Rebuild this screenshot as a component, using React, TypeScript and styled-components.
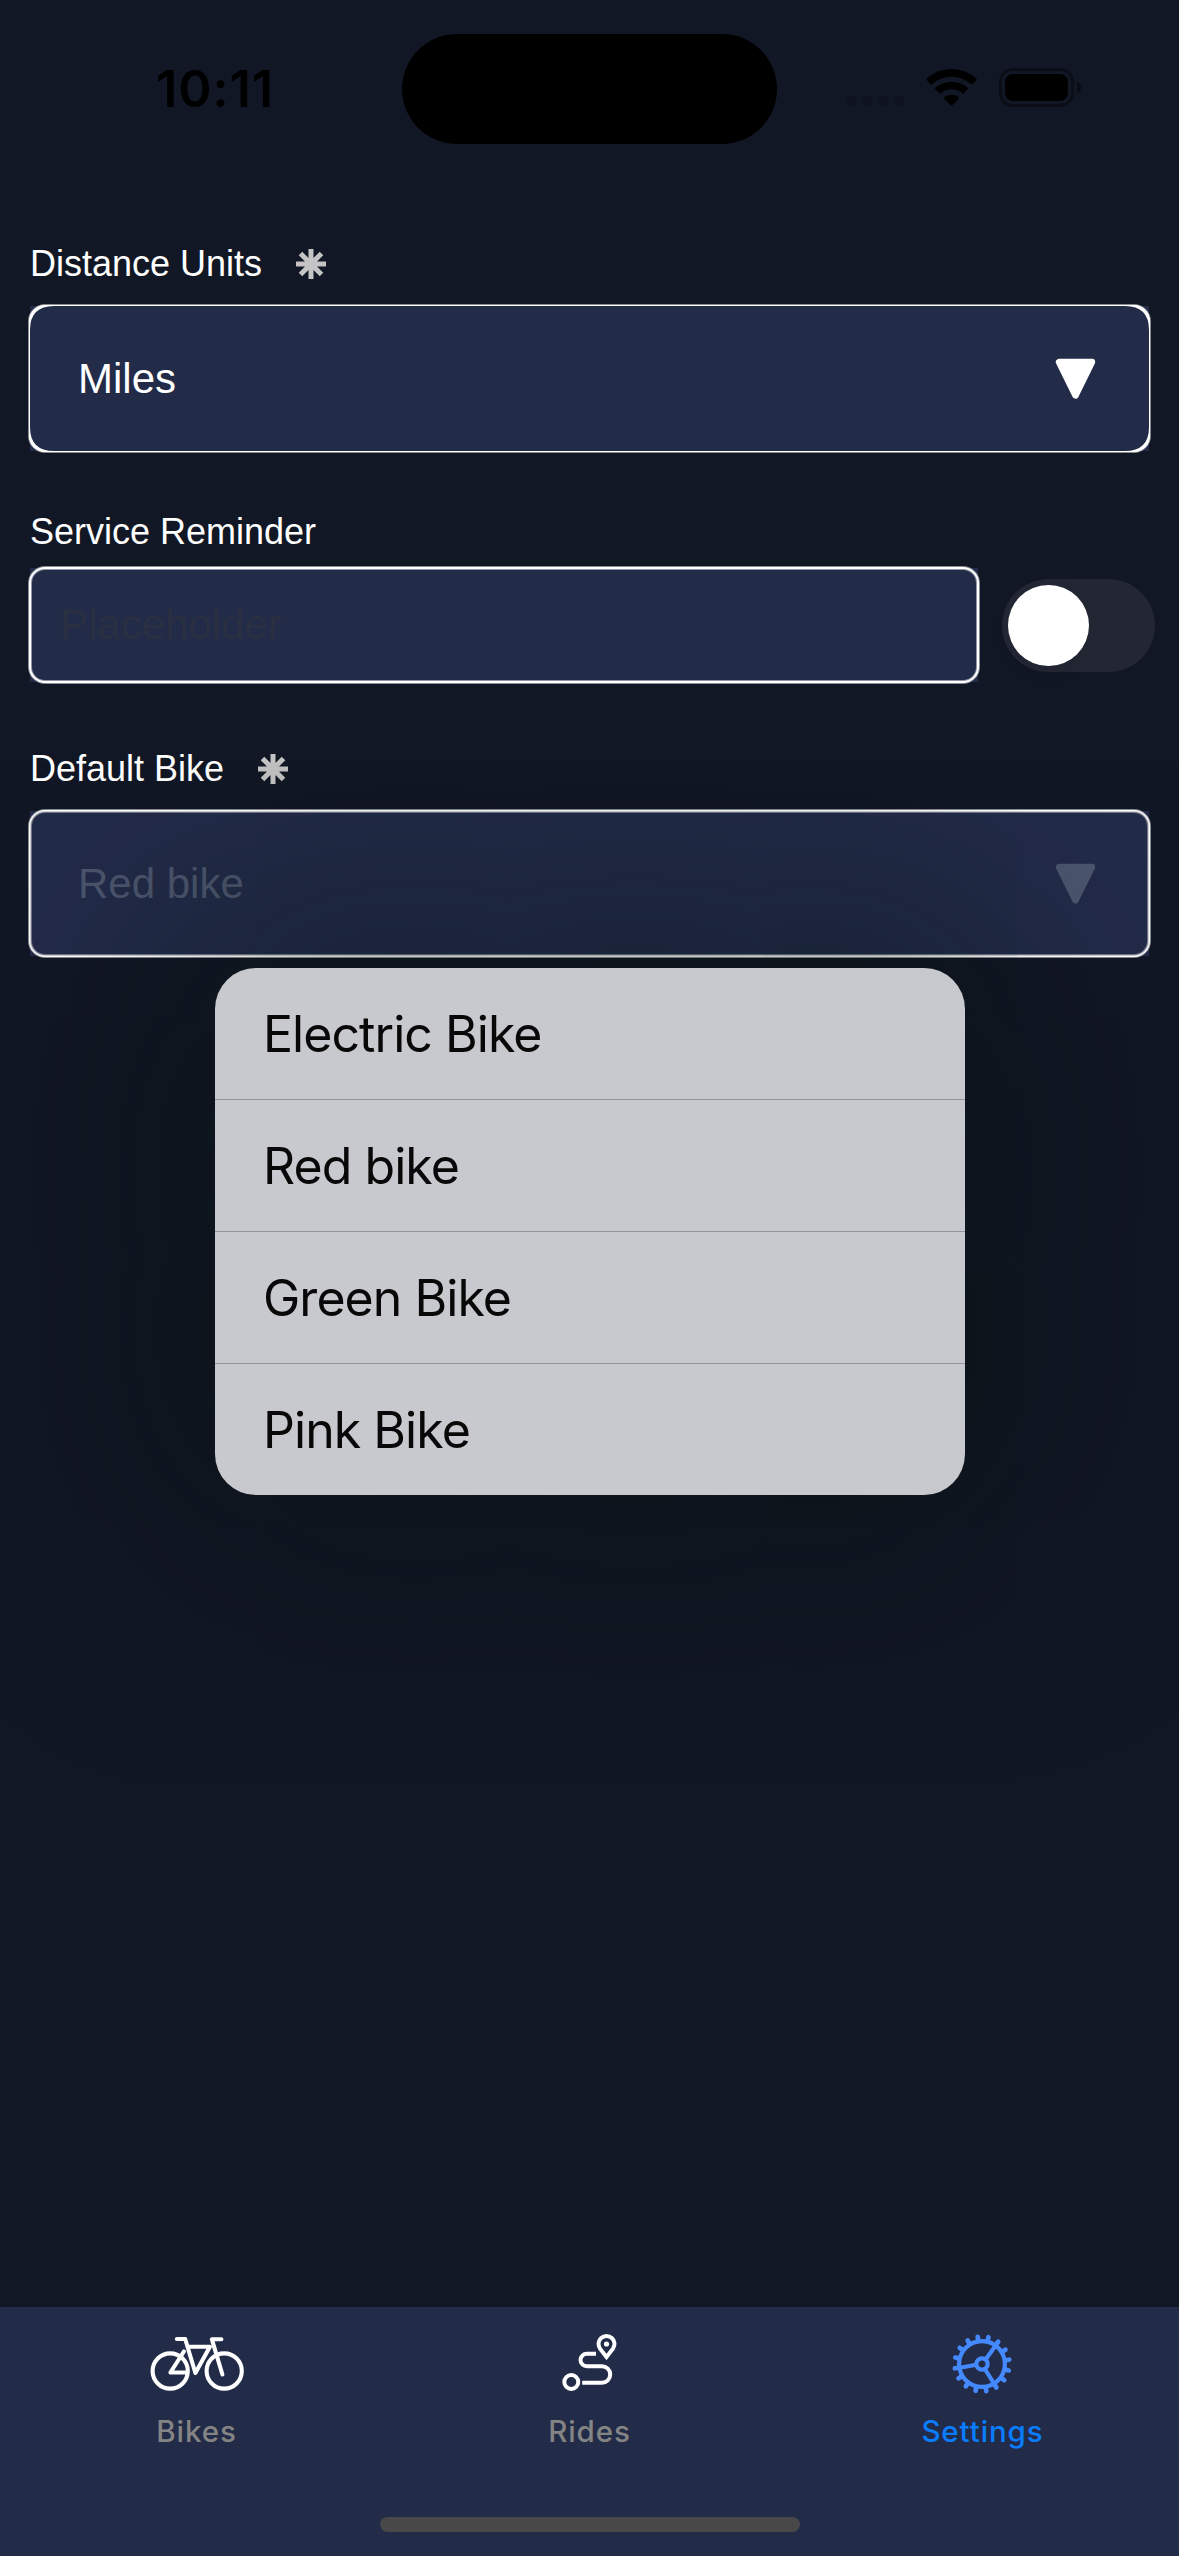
import React from "react";
import styled, { createGlobalStyle, css } from "styled-components";

const Global = createGlobalStyle`
  * { box-sizing: border-box; }
  body { margin: 0; background: #111724; }
`;

const Screen = styled.div`
  width: 1179px;
  height: 2556px;
  display: flex;
  flex-direction: column;
  background: #111724;
  overflow: hidden;
  font-family: "Liberation Sans", Arial, sans-serif;
`;

const StatusBar = styled.header`
  height: 177px;
  flex: none;
  display: grid;
  grid-template-columns: 402px 375px 402px;
  padding-top: 34px;
`;

const Clock = styled.div`
  font: 600 50.5px/110px Inter, sans-serif;
  letter-spacing: 0.9px;
  padding: 0 0 0 28px;
  text-align: center;
  color: #000;
  height: 110px;
`;

const Island = styled.div`
  height: 110px;
  border-radius: 55px;
  background: #000;
`;

const StatusIcons = styled.svg`
  display: block;
  width: 280px;
  height: 80px;
  margin: 16px 0 0 43px;
`;

const Form = styled.main`
  flex: 1;
  padding: 0 30px;
`;

const Label = styled.div<{ $top: number; $height: number }>`
  display: flex;
  align-items: flex-start;
  gap: 34px;
  margin-top: ${(p) => p.$top}px;
  height: ${(p) => p.$height}px;
  font-size: 36px;
  line-height: 40px;
  color: #fff;
  white-space: nowrap;
`;

const Star = styled.svg`
  width: 30px;
  height: 30px;
  margin-top: 5px;
`;

type Edge = "thin" | "full" | "dim";

const edges = {
  thin: css`
    box-shadow: inset 0 0 0 1px #fff;
  `,
  full: css`
    box-shadow: inset 0 0 0 2px #fff, inset 0 0 0 3px rgba(255, 255, 255, 0.5);
  `,
  dim: css`
    box-shadow: inset 0 0 0 1px #fff, inset 0 0 0 2px #d0d2d6, inset 0 0 0 3px rgba(255, 255, 255, 0.35);
  `,
};

const Field = styled.div<{ $h: number; $edge: Edge; $pad: number }>`
  position: relative;
  flex: 1;
  display: flex;
  align-items: center;
  justify-content: space-between;
  height: ${(p) => p.$h}px;
  padding: 0 53px 0 ${(p) => p.$pad}px;
  background: #222b48;
  font-size: 42px;
  line-height: 48px;

  &::after {
    content: "";
    position: absolute;
    inset: -2px;
    border: 1px solid rgba(255, 255, 255, 0.5);
    border-radius: 17px;
    ${(p) => edges[p.$edge]}
  }
`;

const CornerFill = styled.svg`
  position: absolute;
  inset: -2px;
  width: 1123px;
  height: 149px;
`;

const Value = styled.span<{ $color: string }>`
  color: ${(p) => p.$color};
`;

const Arrow = styled.svg`
  width: 41px;
  height: 42px;
`;

const Row = styled.div`
  display: flex;
  align-items: center;
  gap: 24px;
  margin-right: -6px;
`;

const Toggle = styled.div`
  width: 153px;
  height: 93px;
  border-radius: 47px;
  padding: 6px;
  background: #232733;
`;

const Knob = styled.div`
  width: 81px;
  height: 81px;
  border-radius: 50%;
  background: #fff;
  box-shadow: 0 6px 18px rgba(0, 0, 0, 0.06);
`;

const Menu = styled.div`
  position: absolute;
  left: 215px;
  top: 968px;
  width: 750px;
  height: 527px;
  border-radius: 41px;
  background: #c8c9ce;
  box-shadow: 0 0 240px 30px rgba(0, 14, 6, 0.5);
`;

const MenuItem = styled.div`
  height: 132px;
  padding: 1px 0 0 48px;
  font: 400 50px/130px Inter, sans-serif;
  letter-spacing: -0.95px;
  color: #080808;

  &:not(:last-child) {
    border-bottom: 1px solid #92939c;
  }
`;

const TabBar = styled.nav`
  flex: none;
  height: 249px;
  display: grid;
  grid-template-columns: repeat(3, 1fr);
  grid-template-rows: 210px 15px;
  background: #222b48;
`;

const Tab = styled.div<{ $active?: boolean }>`
  display: flex;
  flex-direction: column;
  align-items: center;
  padding-top: 18px;
  font: 450 29.5px/36px Inter, sans-serif;
  letter-spacing: 0.9px;
  color: ${(p) => (p.$active ? "#0a7cff" : "#848484")};
`;

const TabIcon = styled.svg`
  display: block;
  width: 100px;
  height: 76px;
  margin-bottom: 12px;
`;

const HomeIndicator = styled.div`
  grid-column: 1 / -1;
  justify-self: center;
  width: 420px;
  height: 15px;
  border-radius: 8px;
  background: #484848;
`;

const Asterisk = ({ color }: { color: string }) => (
  <Star viewBox="0 0 30 30" stroke={color} strokeWidth="5">
    <path d="M15 0V30M0 15H30M4.5 4.5L25.5 25.5M25.5 4.5L4.5 25.5" />
  </Star>
);

const Triangle = ({ color }: { color: string }) => (
  <Arrow viewBox="0 0 41 42">
    <path
      d="M4 4H37L20.5 37.5Z"
      fill={color}
      stroke={color}
      strokeWidth="6.4"
      strokeLinejoin="round"
    />
  </Arrow>
);

const bikes = ["Electric Bike", "Red bike", "Green Bike", "Pink Bike"];
const teeth = Array.from({ length: 16 }, (_, i) => -9 + i * 22.5);

export default function App() {
  return (
    <>
      <Global />
      <Screen>
        <StatusBar>
          <Clock>10:11</Clock>
          <Island />
          <StatusIcons viewBox="0 0 280 80">
            {[26, 42, 58, 74].map((x) => (
              <rect key={x} x={x} y="46" width="10" height="10" rx="3.5" fill="#0f131f" />
            ))}
            <g fill="none" stroke="#000" strokeWidth="7.6">
              <path d="M108.6 32A33.200 33.200 0 0 1 154.400 32" />
              <path d="M117.300 41.200A20.500 20.500 0 0 1 145.700 41.200" />
            </g>
            <path d="M123.600 48A11.300 11.300 0 0 1 139.400 48L131.500 56Z" />
            <rect x="180.500" y="19.500" width="72" height="36" rx="12" fill="none" stroke="#0b0e17" strokeWidth="3" />
            <rect x="185" y="24" width="63" height="27" rx="8" />
            <path d="M257 31.500Q261 33 261 37.500Q261 42 257 43.500Z" fill="#0a0d15" />
          </StatusIcons>
        </StatusBar>

        <Form>
          <Label $top={67} $height={62}>
            <span>Distance Units</span>
            <Asterisk color="#c4c4c4" />
          </Label>
          <Field $h={145} $edge="thin" $pad={48}>
            <CornerFill viewBox="0 0 1123 149">
              <path
                fillRule="evenodd"
                fill="#fff"
                d="M17 1H1106A16 16 0 0 1 1122 17V132A16 16 0 0 1 1106 148H17A16 16 0 0 1 1 132V17A16 16 0 0 1 17 1ZM26 2Q2 2 2 26V123Q2 147 26 147H1097Q1121 147 1121 123V26Q1121 2 1097 2Z"
              />
            </CornerFill>
            <Value $color="#fff">Miles</Value>
            <Triangle color="#fff" />
          </Field>

          <Label $top={61} $height={56}>
            <span>Service Reminder</span>
          </Label>
          <Row>
            <Field $h={114} $edge="full" $pad={30}>
              <Value $color="#2a2f42">Placeholder</Value>
            </Field>
            <Toggle>
              <Knob />
            </Toggle>
          </Row>

          <Label $top={67} $height={62}>
            <span>Default Bike</span>
            <Asterisk color="#c4c4c4" />
          </Label>
          <Field $h={145} $edge="dim" $pad={48}>
            <Value $color="#4b556c">Red bike</Value>
            <Triangle color="#4b556c" />
          </Field>
        </Form>

        <Menu>
          {bikes.map((name) => (
            <MenuItem key={name}>{name}</MenuItem>
          ))}
        </Menu>

        <TabBar>
          <Tab>
            <TabIcon viewBox="0 0 100 76" fill="none" stroke="#fff" strokeWidth="4.1" strokeLinecap="round" strokeLinejoin="round">
              <g transform="translate(-0.600 0)">
                <circle cx="23.800" cy="46" r="17.600" />
                <circle cx="77.800" cy="46" r="17.600" />
                <path d="M30.500 14H38.800L49 48L63.500 21.700H41M37.500 26.500L24 47.500H40.200M75 14.300H65.500L76 49.500" />
              </g>
            </TabIcon>
            Bikes
          </Tab>
          <Tab>
            <TabIcon viewBox="0 0 100 76" fill="none" stroke="#fff" strokeWidth="4">
              <circle cx="31.300" cy="57" r="7" />
              <path d="M42.200 57.700H62A8.200 8.200 0 0 0 62 41.300H46.800A6.300 6.300 0 0 1 46.800 28.700H56" />
              <path d="M66.500 32L60 23.600A8 8 0 1 1 73 23.600Z" />
              <circle cx="66.500" cy="19" r="2.600" fill="#fff" stroke="none" />
            </TabIcon>
            Rides
          </Tab>
          <Tab $active>
            <TabIcon viewBox="0 0 100 76" fill="none" stroke="#4589ff" strokeWidth="4.2" strokeLinecap="round">
              <g transform="translate(49 39)">
                <circle r="22.900" />
                <circle r="5.700" />
                {teeth.map((a) => (
                  <path key={a} d="M0 -24V-27.500" strokeWidth="4.700" transform={`rotate(${a})`} />
                ))}
                <path d="M4 -5L14 -19M3.500 6L12 19.500M-7 1L-23.500 4" />
              </g>
            </TabIcon>
            Settings
          </Tab>
          <HomeIndicator />
        </TabBar>
      </Screen>
    </>
  );
}
